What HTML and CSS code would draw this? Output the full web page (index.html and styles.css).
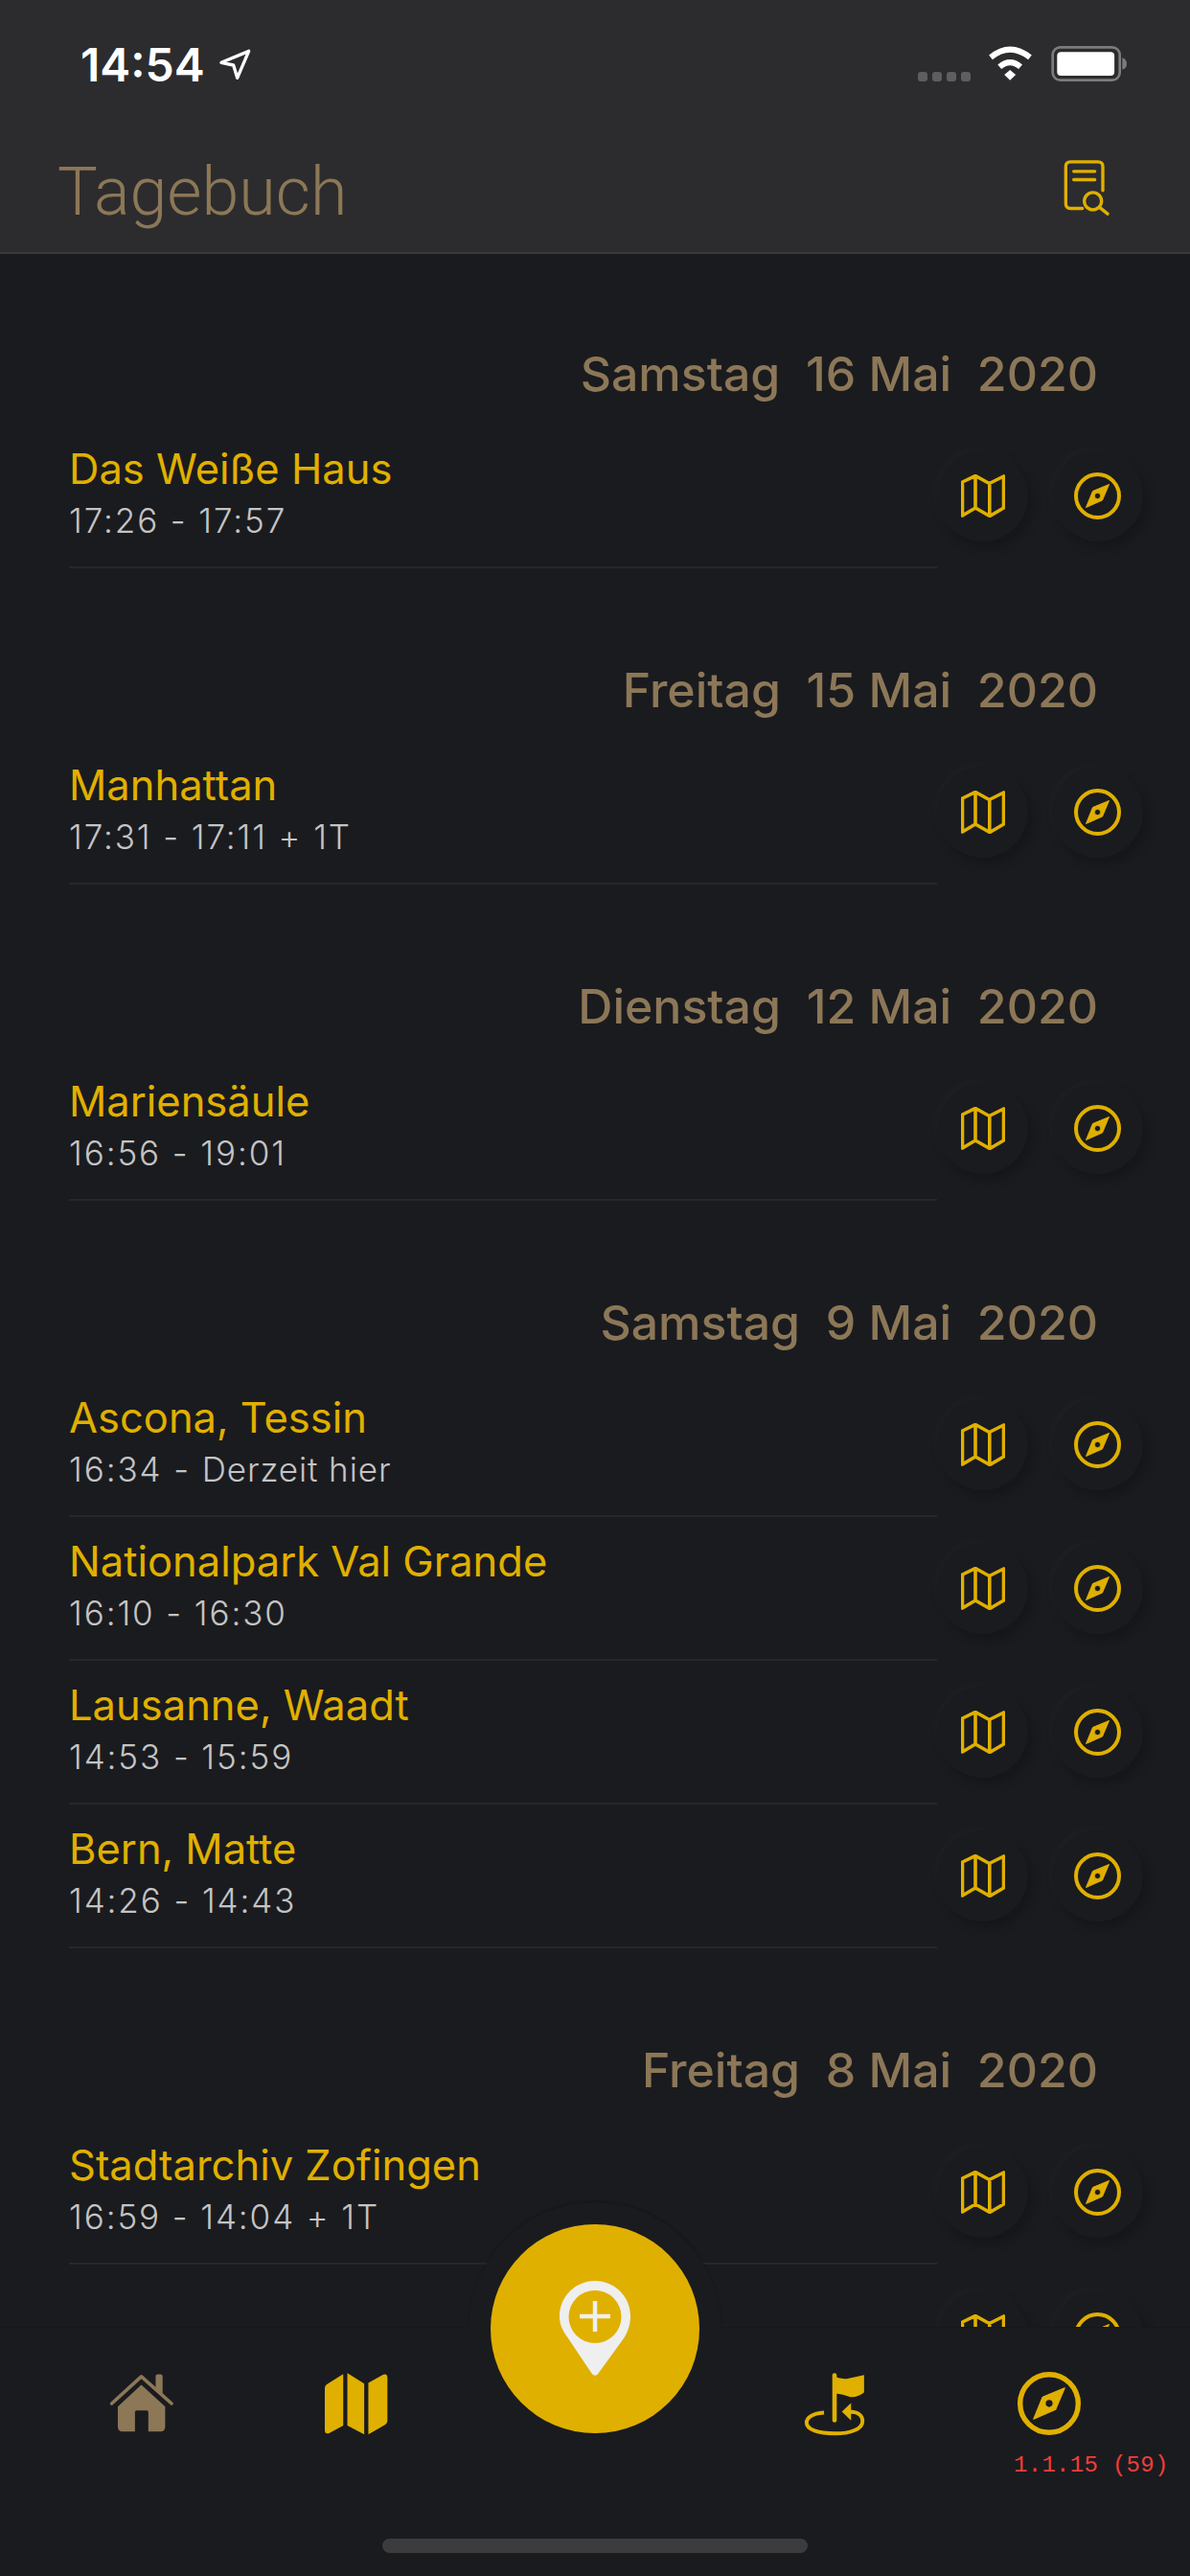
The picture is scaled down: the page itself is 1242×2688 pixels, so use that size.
FILE: index.html
```html
<!DOCTYPE html>
<html lang="de">
<head>
    <meta charset="UTF-8">
    <meta name="viewport" content="width=device-width, initial-scale=1.0">
    <title>Tagebuch</title>
    <link rel="stylesheet" href="styles.css">
</head>
<body>
<svg class="icon-defs" width="0" height="0">
    <symbol id="map-outline" viewBox="0 0 46 45">
        <path d="M1.5 8 15 1.5 29.5 9.500 44.500 2V35L30 43.500 15 35 1.500 43ZM15 1.500V35M29.800 9.500V43.500" fill="none" stroke="currentColor" stroke-width="3.600" stroke-linejoin="round"/>
    </symbol>
    <symbol id="compass" viewBox="0 0 49 49">
        <circle cx="24.500" cy="24.500" r="22.500" fill="none" stroke="currentColor" stroke-width="4"/>
        <path fill-rule="evenodd" fill="currentColor" stroke="currentColor" stroke-linejoin="round" d="M36.500 12.500 29.500 29 12.500 36.500 19.500 19.500ZM24.500 21.300a3.200 3.200 0 1 0 0 6.400 3.200 3.200 0 0 0 0-6.400Z"/>
    </symbol>
</svg>

<div class="phone">
    <header class="topbar">
        <div class="statusbar">
            <div class="clock">
                <span>14:54</span>
                <svg class="loc-arrow" viewBox="465 62 105 102"><path d="M474 108 560 72 524 156 512 116Z" fill="none" stroke="#fff" stroke-width="10" stroke-linejoin="round"/></svg>
            </div>
            <div class="status-icons">
                <div class="signal"><i></i><i></i><i></i><i></i></div>
                <svg class="wifi" viewBox="275 55 142 115">
                    <path d="M284 94Q345 44 408 94M312 124Q345 96 378 124" fill="none" stroke="#fff" stroke-width="18"/>
                    <path d="M327 149 345 134 363 149 345 166Z" fill="#fff"/>
                </svg>
                <svg class="battery" viewBox="474 56 240 112">
                    <rect x="478" y="60" width="212" height="104" rx="24" fill="none" stroke="#7c7c7e" stroke-width="8"/>
                    <rect x="492" y="75" width="181" height="75" rx="12" fill="#fff"/>
                    <path d="M698 92Q712 98 712 112 712 126 698 131Z" fill="#7c7c7e"/>
                </svg>
            </div>
        </div>
        <div class="navbar">
            <h1 class="nav-title">Tagebuch</h1>
            <svg class="report-icon" viewBox="146 80 144 176">
                <path d="M205 234H168Q153 234 153 219V103Q153 88 168 88H254Q269 88 269 103V178M178 118H244M178 144H244M258 230 284 251" fill="none" stroke="#e0b000" stroke-width="10" stroke-linecap="round"/>
                <circle cx="238" cy="211" r="27" fill="none" stroke="#e0b000" stroke-width="10"/>
            </svg>
        </div>
    </header>

    <main class="diary">
        <section class="day">
            <h2 class="day-title">Samstag&nbsp; 16 Mai&nbsp; 2020</h2>
            <div class="entry">
                <div class="entry-text"><div class="place">Das Weiße Haus</div><div class="times">17:26 - 17:57</div></div>
                <div class="entry-actions">
                    <div class="round-btn"><svg class="map-svg"><use href="#map-outline"/></svg></div>
                    <div class="round-btn"><svg class="compass-svg"><use href="#compass"/></svg></div>
                </div>
            </div>
        </section>
        <section class="day">
            <h2 class="day-title">Freitag&nbsp; 15 Mai&nbsp; 2020</h2>
            <div class="entry">
                <div class="entry-text"><div class="place">Manhattan</div><div class="times">17:31 - 17:11 + 1T</div></div>
                <div class="entry-actions">
                    <div class="round-btn"><svg class="map-svg"><use href="#map-outline"/></svg></div>
                    <div class="round-btn"><svg class="compass-svg"><use href="#compass"/></svg></div>
                </div>
            </div>
        </section>
        <section class="day">
            <h2 class="day-title">Dienstag&nbsp; 12 Mai&nbsp; 2020</h2>
            <div class="entry">
                <div class="entry-text"><div class="place">Mariensäule</div><div class="times">16:56 - 19:01</div></div>
                <div class="entry-actions">
                    <div class="round-btn"><svg class="map-svg"><use href="#map-outline"/></svg></div>
                    <div class="round-btn"><svg class="compass-svg"><use href="#compass"/></svg></div>
                </div>
            </div>
        </section>
        <section class="day">
            <h2 class="day-title">Samstag&nbsp; 9 Mai&nbsp; 2020</h2>
            <div class="entry">
                <div class="entry-text"><div class="place">Ascona, Tessin</div><div class="times">16:34 - <span class="note">Derzeit hier</span></div></div>
                <div class="entry-actions">
                    <div class="round-btn"><svg class="map-svg"><use href="#map-outline"/></svg></div>
                    <div class="round-btn"><svg class="compass-svg"><use href="#compass"/></svg></div>
                </div>
            </div>
            <div class="entry">
                <div class="entry-text"><div class="place">Nationalpark Val Grande</div><div class="times">16:10 - 16:30</div></div>
                <div class="entry-actions">
                    <div class="round-btn"><svg class="map-svg"><use href="#map-outline"/></svg></div>
                    <div class="round-btn"><svg class="compass-svg"><use href="#compass"/></svg></div>
                </div>
            </div>
            <div class="entry">
                <div class="entry-text"><div class="place">Lausanne, Waadt</div><div class="times">14:53 - 15:59</div></div>
                <div class="entry-actions">
                    <div class="round-btn"><svg class="map-svg"><use href="#map-outline"/></svg></div>
                    <div class="round-btn"><svg class="compass-svg"><use href="#compass"/></svg></div>
                </div>
            </div>
            <div class="entry">
                <div class="entry-text"><div class="place">Bern, Matte</div><div class="times">14:26 - 14:43</div></div>
                <div class="entry-actions">
                    <div class="round-btn"><svg class="map-svg"><use href="#map-outline"/></svg></div>
                    <div class="round-btn"><svg class="compass-svg"><use href="#compass"/></svg></div>
                </div>
            </div>
        </section>
        <section class="day">
            <h2 class="day-title">Freitag&nbsp; 8 Mai&nbsp; 2020</h2>
            <div class="entry">
                <div class="entry-text"><div class="place">Stadtarchiv Zofingen</div><div class="times">16:59 - 14:04 + 1T</div></div>
                <div class="entry-actions">
                    <div class="round-btn"><svg class="map-svg"><use href="#map-outline"/></svg></div>
                    <div class="round-btn"><svg class="compass-svg"><use href="#compass"/></svg></div>
                </div>
            </div>
            <div class="entry">
                <div class="entry-text"></div>
                <div class="entry-actions">
                    <div class="round-btn"><svg class="map-svg"><use href="#map-outline"/></svg></div>
                    <div class="round-btn"><svg class="compass-svg"><use href="#compass"/></svg></div>
                </div>
            </div>
        </section>
    </main>

    <nav class="tabbar">
        <div class="fab-halo"></div>
        <div class="tab">
            <svg class="tab-home" viewBox="36 46 208 192">
                <path d="M47 145 140 60 235 145" fill="none" stroke="#8c7757" stroke-width="11" stroke-linecap="round" stroke-linejoin="round"/>
                <path d="M185 60Q185 53 192 53H200Q207 53 207 60V118L185 98Z" fill="#8c7757"/>
                <path d="M140 86 215 155V218Q215 233 200 233H162V172Q162 167 157 167H125Q120 167 120 172V233H81Q66 233 66 218V155Z" fill="#8c7757"/>
            </svg>
        </div>
        <div class="tab">
            <svg class="tab-map" viewBox="706 44 208 200">
                <path d="M770 50V212L727 235Q712 241 712 226V95Q712 85 722 80ZM783 47 836 80V240L783 212ZM849 78 895 52Q909 47 909 62V195Q909 205 900 210L849 240Z" fill="#e0b000"/>
            </svg>
        </div>
        <div class="tab-gap"></div>
        <div class="tab">
            <svg class="tab-flag" viewBox="56 40 198 202">
                <path d="M155 51V192" fill="none" stroke="#e0b000" stroke-width="14" stroke-linecap="round"/>
                <path d="M148 50Q175 66 200 60 225 56 248 50V105Q225 122 205 119 180 110 158 108Z" fill="#e0b000"/>
                <path d="M122 168C85 170 67 185 67 200 67 222 105 234 155 234 205 234 243 220 243 195 243 175 225 165 200 165" fill="none" stroke="#e0b000" stroke-width="12"/>
                <path d="M178 165 207 138V193Z" fill="#e0b000"/>
            </svg>
        </div>
        <div class="tab">
            <svg class="tab-compass"><use href="#compass"/></svg>
            <span class="version">1.1.15 (59)</span>
        </div>
        <button class="fab">
            <svg class="fab-pin" viewBox="0 0 74 100">
                <path fill-rule="evenodd" d="M37 0C16.500 0 0 16.500 0 37 0 46 3.500 52 7 57L33.500 96.500Q37 101 40.500 96.500L67 60C70.500 55 74 46 74 37 74 16.500 57.500 0 37 0ZM37 10A27 27 0 1 1 37 65 27 27 0 0 1 37 10Z" fill="#efefef"/>
                <path d="M37 21V53M21 37H53" fill="none" stroke="#efefef" stroke-width="4.500"/>
            </svg>
        </button>
        <div class="home-indicator"></div>
    </nav>
</div>
</body>
</html>
```

FILE: styles.css
```css
* {
    box-sizing: border-box;
}
html, body {
    margin: 0;
    padding: 0;
    background: #1a1b1f;
}
.icon-defs {
    position: absolute;
}
.phone {
    width: 1242px;
    height: 2688px;
    display: flex;
    flex-direction: column;
    overflow: hidden;
    font-family: Inter, "Noto Sans", sans-serif;
}

/* top bar */
.topbar {
    height: 265px;
    flex-shrink: 0;
    background: #2c2c2e;
    border-bottom: 2px solid #3a3a3c;
}
.statusbar {
    height: 133px;
    padding: 44px 65px 0 84px;
    display: flex;
    justify-content: space-between;
    align-items: flex-start;
}
.clock {
    display: flex;
    align-items: center;
    gap: 14px;
    height: 46px;
    color: #fff;
    font-size: 48px;
    font-weight: 600;
}
.loc-arrow {
    width: 35px;
    height: 34px;
}
.status-icons {
    display: flex;
    align-items: flex-end;
    height: 41px;
}
.signal {
    display: flex;
    gap: 5px;
    margin-right: 18px;
}
.signal i {
    width: 10px;
    height: 10px;
    border-radius: 3px;
    background: #5e5e60;
}
.wifi {
    width: 47px;
    height: 38px;
    margin-right: 19px;
}
.battery {
    width: 80px;
    height: 37px;
}
.navbar {
    height: 130px;
    padding: 0 84px 0 60px;
    display: flex;
    justify-content: space-between;
    align-items: center;
}
.nav-title {
    margin: 4px 0 0;
    color: #8c7757;
    font-family: Roboto, sans-serif;
    font-size: 70px;
    font-weight: 300;
    line-height: 1;
}
.report-icon {
    width: 48px;
    height: 59px;
    margin-bottom: 6px;
}

/* list */
.diary {
    flex: 1;
    min-height: 0;
    overflow: hidden;
}
.day-title {
    height: 180px;
    margin: 0;
    padding: 98px 96px 0 0;
    color: #8c7757;
    font-size: 50px;
    font-weight: 500;
    line-height: 58px;
    text-align: right;
}
.day:first-child .day-title {
    height: 178px;
    padding-top: 96px;
}
.entry {
    height: 150px;
    padding: 0 49px 0 72px;
    display: flex;
}
.entry-text {
    flex: 1;
    padding-top: 21px;
    border-bottom: 2px solid #26272a;
}
.place {
    color: #e0b000;
    font-size: 43.500px;
    font-weight: 400;
    line-height: 50px;
}
.times {
    margin-top: 7px;
    color: #c4c4c4;
    font-size: 35px;
    font-weight: 300;
    line-height: 44px;
    letter-spacing: 1.900px;
}
.note {
    letter-spacing: 0.900px;
}
.entry-actions {
    display: flex;
    gap: 25px;
    padding-top: 27px;
}
.round-btn {
    width: 95px;
    height: 95px;
    border-radius: 50%;
    color: #e0b000;
    background: #1a1b1f;
    box-shadow: 5px 7px 11px rgba(0, 0, 0, 0.2), -3px -3px 6px rgba(255, 255, 255, 0.025);
    display: flex;
    align-items: center;
    justify-content: center;
}
.map-svg {
    width: 46px;
    height: 45px;
}
.compass-svg {
    width: 49px;
    height: 49px;
}

/* bottom tabs */
.tabbar {
    height: 260px;
    flex-shrink: 0;
    position: relative;
    padding: 45px 35px 0;
    display: grid;
    grid-template-columns: 224px 224px 1fr 224px 224px;
    align-items: start;
    background: #1a1b1f;
    border-top: 2px solid #17181b;
}
.tab {
    position: relative;
    display: flex;
    justify-content: center;
}
.tab-home {
    width: 69px;
    height: 64px;
}
.tab-map {
    width: 69px;
    height: 67px;
}
.tab-flag {
    width: 66px;
    height: 67px;
}
.tab-compass {
    width: 66px;
    height: 66px;
    color: #e0b000;
}
.version {
    position: absolute;
    top: 84px;
    left: 75px;
    color: #ee3e3a;
    font-family: "Liberation Mono", monospace;
    font-size: 24px;
    line-height: 28px;
    letter-spacing: 0.3px;
    white-space: nowrap;
}
.fab-halo {
    position: absolute;
    left: 489px;
    top: -132px;
    width: 264px;
    height: 132px;
    border-radius: 132px 132px 0 0;
    background: #1a1b1f;
    box-shadow: 0 -2px 2px rgba(0, 0, 0, 0.15);
}
.fab {
    position: absolute;
    left: 512px;
    top: -109px;
    width: 218px;
    height: 218px;
    padding: 0;
    border: none;
    border-radius: 50%;
    background: #e0b000;
    display: flex;
    align-items: center;
    justify-content: center;
}
.fab-pin {
    width: 74px;
    height: 100px;
}
.home-indicator {
    position: absolute;
    left: 399px;
    top: 219px;
    width: 444px;
    height: 15px;
    border-radius: 8px;
    background: #3c3c3e;
}
```
